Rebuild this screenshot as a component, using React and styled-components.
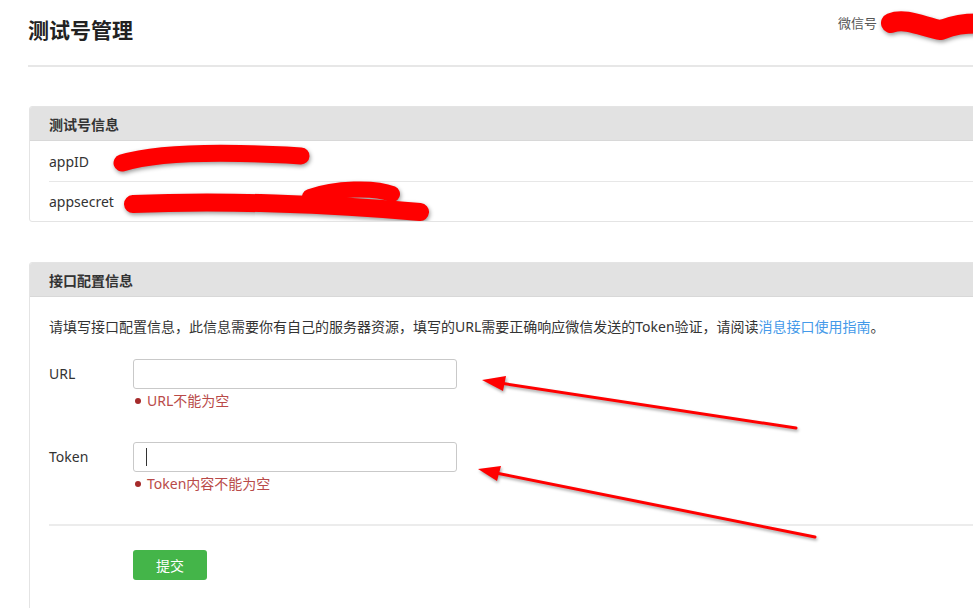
import React from 'react';
import styled, { createGlobalStyle } from 'styled-components';

const GlobalStyle = createGlobalStyle`
  html, body {
    margin: 0;
    padding: 0;
    background: #fff;
    overflow: hidden;
  }
  body {
    font-family: "Noto Sans", "Noto Sans CJK SC", sans-serif;
    color: #333;
  }
  * {
    box-sizing: border-box;
  }
`;

const Page = styled.div`
  position: relative;
  width: 945px;
  margin-left: 28px;
  height: 608px;
  overflow: hidden;
`;

const Header = styled.div`
  display: flex;
  align-items: flex-start;
  height: 67px;
  margin-right: -30px;
  padding-right: 30px;
  border-bottom: 2px solid #e7e7e7;
`;

const Title = styled.h1`
  margin: 17px 0 0;
  font-size: 21px;
  line-height: 26px;
  font-weight: 700;
  color: #222;
`;

const Account = styled.div`
  margin-left: auto;
  margin-right: -8px;
  margin-top: 2px;
  display: flex;
  align-items: center;
  height: 40px;
  font-size: 13px;
  color: #555;
`;

const Scribble = styled.svg`
  display: block;
  flex: none;
  overflow: visible;
  margin-left: ${p => p.$offset || 0}px;
  filter: drop-shadow(1px 2px 2px rgba(0, 0, 0, 0.4));

  path {
    fill: none;
    stroke: #ff0000;
    stroke-linecap: round;
    stroke-linejoin: round;
  }
`;

const Panel = styled.section`
  margin-top: ${p => p.$gap}px;
  margin-left: 1px;
  margin-right: -30px;
  border: 1px solid #e4e4e4;
  border-radius: 3px;
  background: #fff;
  overflow: hidden;
`;

const PanelHead = styled.div`
  height: 34px;
  padding-left: 19px;
  display: flex;
  align-items: center;
  background: #e2e2e2;
  border-bottom: 1px solid #d8d8d8;
  font-size: 14px;
  font-weight: 700;
  color: #333;
`;

const InfoRow = styled.div`
  display: flex;
  align-items: center;
  height: 40px;
  margin-left: 19px;
  font-size: 14px;
  color: #333;

  & + & {
    border-top: 1px solid #e7e7e7;
  }
`;

const PanelBody = styled.div`
  padding: 20px 0 40px 19px;
`;

const Notice = styled.p`
  margin: 0;
  font-size: 14px;
  line-height: 20px;
  color: #333;

  a {
    color: #459ae9;
    text-decoration: none;
  }
`;

const FormRow = styled.div`
  display: grid;
  grid-template-columns: 84px 324px;
  margin-top: ${p => p.$gap}px;
`;

const Label = styled.label`
  font-size: 14px;
  line-height: 30px;
  color: #333;
`;

const Field = styled.div`
  position: relative;
`;

const Input = styled.input`
  display: block;
  width: 324px;
  height: 30px;
  border: 1px solid #c9c9c9;
  border-radius: 3px;
  padding: 0 10px;
  font: inherit;
  outline: none;
  background: #fff;
`;

const Caret = styled.span`
  position: absolute;
  left: 13px;
  top: 6px;
  width: 1px;
  height: 18px;
  background: #333;
`;

const Error = styled.div`
  display: flex;
  align-items: center;
  gap: 6px;
  margin-top: 2px;
  padding-left: 2px;
  font-size: 14px;
  line-height: 20px;
  color: #b94a48;

  &::before {
    content: '';
    width: 6px;
    height: 6px;
    border-radius: 50%;
    background: #a52a2a;
  }
`;

const Divider = styled.hr`
  margin: 30px 0 0;
  border: 0;
  border-top: 2px solid #ececec;
`;

const Actions = styled.div`
  padding: 24px 0 0 84px;
`;

const SubmitButton = styled.button`
  width: 74px;
  height: 30px;
  border: 0;
  border-radius: 3px;
  background: #44b549;
  color: #fff;
  font: inherit;
  font-size: 14px;
  cursor: pointer;
`;

const Annotations = styled.svg`
  position: absolute;
  left: -28px;
  top: 0;
  width: 973px;
  height: 608px;
  pointer-events: none;
  filter: drop-shadow(1px 2px 1.5px rgba(0, 0, 0, 0.35));

  line {
    stroke: #ff0000;
    stroke-width: 3;
    stroke-linecap: round;
  }
  polygon {
    fill: #ff0000;
  }
`;

export default function App() {
  return (
    <>
      <GlobalStyle />
      <Page>
        <Header>
          <Title>测试号管理</Title>
          <Account>
            微信号
            <Scribble width="100" height="40" $offset={4}>
              <path d="M10 21 C 25 15, 45 26, 60 28 C 70 24, 82 20, 110 22" strokeWidth="20" />
            </Scribble>
          </Account>
        </Header>

        <Panel $gap={39}>
          <PanelHead>测试号信息</PanelHead>
          <InfoRow>
            appID
            <Scribble width="200" height="40" $offset={24}>
              <path d="M9 22 Q 58 7, 188 15" strokeWidth="17" />
            </Scribble>
          </InfoRow>
          <InfoRow>
            appsecret
            <Scribble width="300" height="40" $offset={6}>
              <path d="M13 22 C 100 18, 210 22, 300 30" strokeWidth="18" />
              <path d="M190 15 C 215 6, 255 5, 272 12" strokeWidth="16" />
            </Scribble>
          </InfoRow>
        </Panel>

        <Panel $gap={40}>
          <PanelHead>接口配置信息</PanelHead>
          <PanelBody>
            <Notice>
              请填写接口配置信息，此信息需要你有自己的服务器资源，填写的URL需要正确响应微信发送的Token验证，请阅读<a href="#">消息接口使用指南</a>。
            </Notice>

            <FormRow $gap={22}>
              <Label>URL</Label>
              <Field>
                <Input type="text" />
                <Error>URL不能为空</Error>
              </Field>
            </FormRow>

            <FormRow $gap={31}>
              <Label>Token</Label>
              <Field>
                <Input type="text" />
                <Caret />
                <Error>Token内容不能为空</Error>
              </Field>
            </FormRow>

            <Divider />

            <Actions>
              <SubmitButton type="button">提交</SubmitButton>
            </Actions>
          </PanelBody>
        </Panel>

        <Annotations viewBox="0 0 973 608">
          <line x1="500" y1="383" x2="796" y2="428" />
          <polygon points="482,380 506,376 503,391" />
          <line x1="496" y1="473" x2="815" y2="537" />
          <polygon points="478,469 501,466 497,481" />
        </Annotations>
      </Page>
    </>
  );
}
